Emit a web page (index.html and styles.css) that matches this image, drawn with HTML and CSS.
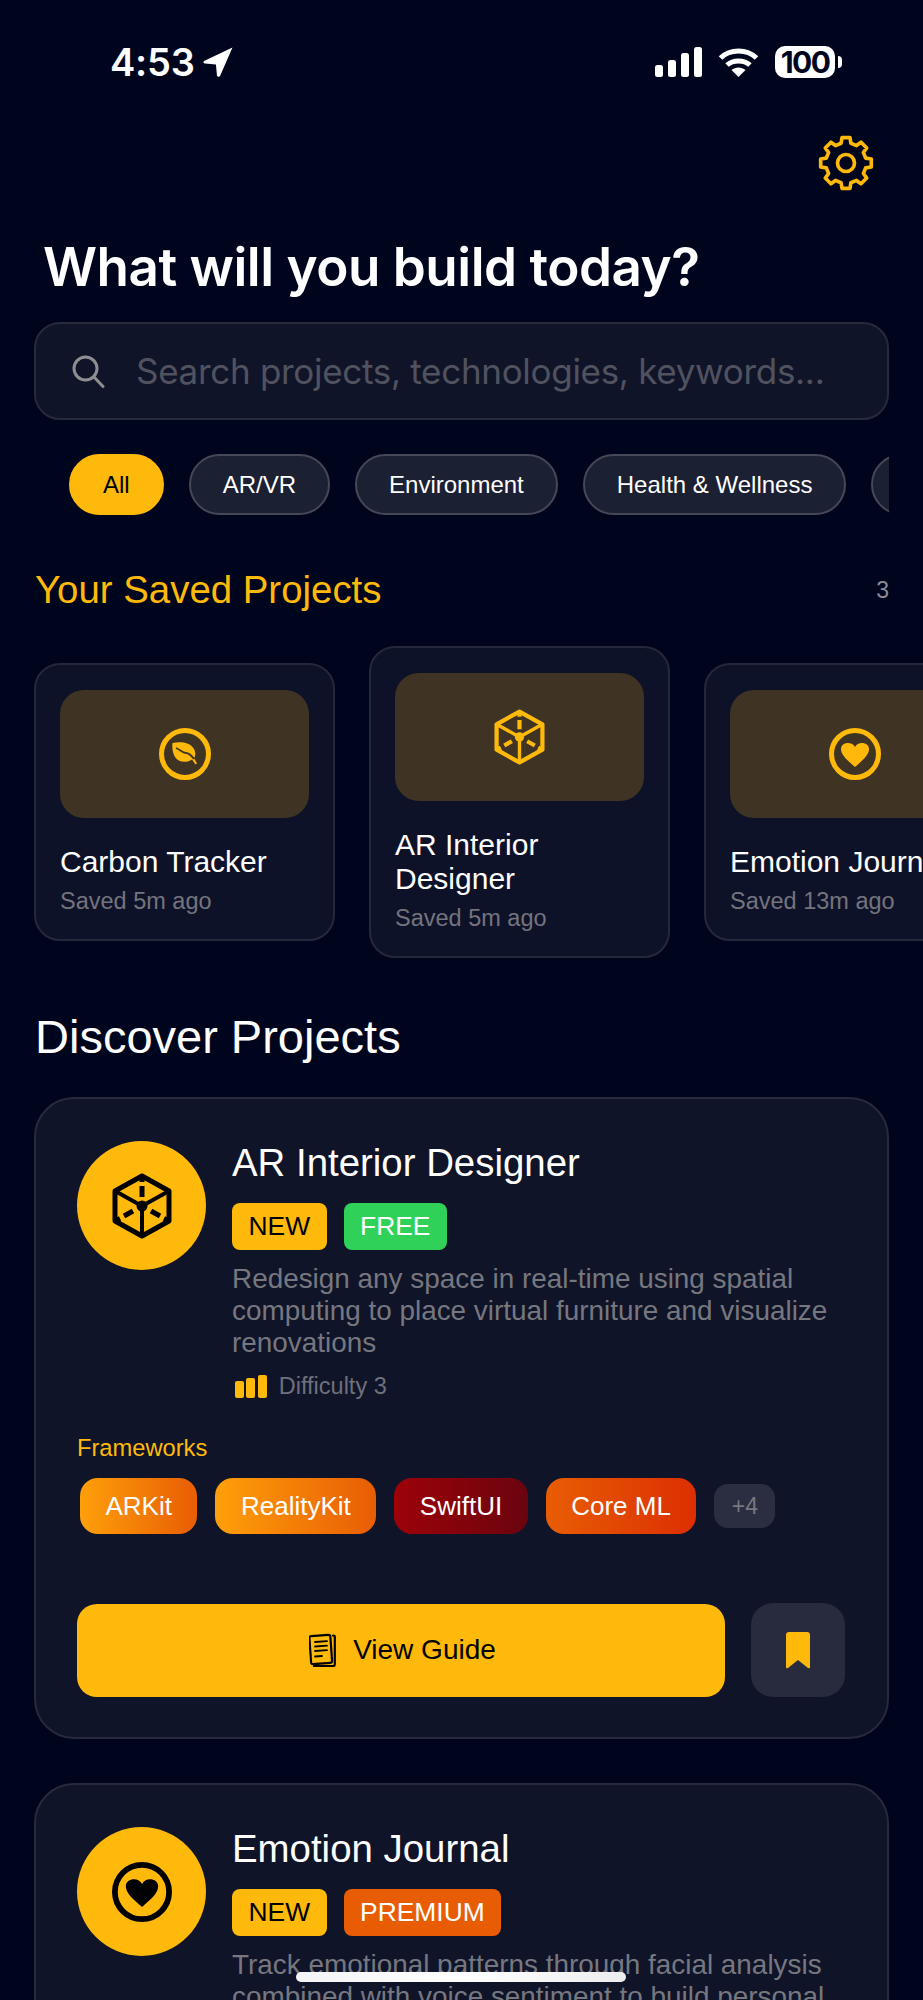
FILE: index.html
```html
<!DOCTYPE html>
<html lang="en">
<head>
<meta charset="utf-8">
<title>What will you build today?</title>
<link rel="stylesheet" href="styles.css">
</head>
<body>
<svg class="defs" width="0" height="0" aria-hidden="true">
  <symbol id="cube" viewBox="0 0 60 66">
    <g fill="none" stroke="currentColor" stroke-width="5" stroke-linejoin="round" stroke-linecap="butt">
      <path d="M30 3 57 18V48L30 63 3 48V18Z"/>
      <path d="M3 18 30 33 57 18M30 33V63" stroke-width="4"/>
      <path d="M30 3V9M30 13V24M21 38 12 43M8 45.5 3 48M39 38 48 43M52 45.5 57 48"/>
    </g>
    <circle cx="30" cy="33" r="5.5" fill="currentColor"/>
  </symbol>
  <symbol id="ring-heart" viewBox="0 0 52 52">
    <circle cx="26" cy="26" r="23.5" fill="none" stroke="currentColor" stroke-width="5"/>
    <path fill="currentColor" d="M26 39C18 32 12 27 12 21 12 17 15.5 15 19 15 22 15 24.8 16.5 26 19 27.2 16.5 30 15 33 15 36.5 15 40 17 40 21 40 27 34 32 26 39Z"/>
  </symbol>
</svg>

<div class="status">
  <div class="status-left">
    <span class="clock">4:53</span>
    <svg class="arrow" viewBox="0 0 29 29"><path fill="#fff" d="M28.5.5 1 13.5C0 14.5.5 16 2 16L12.5 17 13.5 27.5C14 29 16 29 16.5 28Z"/></svg>
  </div>
  <div class="status-right">
    <div class="signal"><i class="s1"></i><i class="s2"></i><i class="s3"></i><i class="s4"></i></div>
    <svg class="wifi" viewBox="0 0 41 30">
      <g fill="none" stroke="#fff" stroke-width="5"><path d="M2.5 11C12 1.5 29 1.5 38.5 11"/><path d="M9 18C15 12.5 26 12.5 32 18"/></g>
      <path fill="#fff" d="M20.5 30 13.5 23C17.5 19.5 23.5 19.5 27.5 23Z"/>
    </svg>
    <div class="battery"><span class="battery-body">100</span><i class="battery-nub"></i></div>
  </div>
</div>

<main class="page">
  <div class="topbar">
    <svg class="gear" viewBox="-30 -30 60 60">
      <g fill="none" stroke="#FFB90A" stroke-width="3.8" stroke-linejoin="round">
        <polygon points="-5.08,-20.38 -4.15,-26.17 4.15,-26.17 5.08,-20.38 10.82,-18 15.57,-21.44 21.44,-15.57 18,-10.82 20.38,-5.08 26.17,-4.15 26.17,4.15 20.38,5.08 18,10.82 21.44,15.57 15.57,21.44 10.82,18 5.08,20.38 4.15,26.17 -4.15,26.17 -5.08,20.38 -10.82,18 -15.57,21.44 -21.44,15.57 -18,10.82 -20.38,5.08 -26.17,4.15 -26.17,-4.15 -20.38,-5.08 -18,-10.82 -21.44,-15.57 -15.57,-21.44 -10.82,-18"/>
        <circle r="8.8"/>
      </g>
    </svg>
  </div>

  <h1 class="headline">What will you build today?</h1>

  <div class="search">
    <svg class="search-icon" viewBox="0 0 33 33"><g fill="none" stroke="#8E8E93" stroke-width="3" stroke-linecap="round"><circle cx="13.5" cy="13.5" r="11.5"/><path d="M22 22 31 31.5"/></g></svg>
    <span class="search-text">Search projects, technologies, keywords...</span>
  </div>

  <div class="chips">
    <span class="chip chip-on">All</span>
    <span class="chip">AR/VR</span>
    <span class="chip">Environment</span>
    <span class="chip">Health &amp; Wellness</span>
    <span class="chip"></span>
  </div>

  <div class="saved-head">
    <h2 class="saved-title">Your Saved Projects</h2>
    <span class="saved-count">3</span>
  </div>

  <div class="saved-row">
    <article class="saved-card">
      <div class="thumb">
        <svg class="thumb-ring" viewBox="0 0 52 52">
          <circle cx="26" cy="26" r="23.5" fill="none" stroke="currentColor" stroke-width="5"/>
          <path fill="currentColor" d="M13.5 15C21 13.5 31 14 35 21 37 25 36.5 28 35 30L38 35.5 36.5 36.5 33 31.5C28 35 20 35 16 29 13.5 25 13 20 13.5 15Z"/>
          <path fill="none" stroke="#3F3423" stroke-width="1.8" d="M17 20C22 22 23 25 27 25 30 25 32 27 35 31"/>
        </svg>
      </div>
      <h3 class="saved-name">Carbon Tracker</h3>
      <p class="saved-when">Saved 5m ago</p>
    </article>
    <article class="saved-card">
      <div class="thumb">
        <svg class="thumb-cube"><use href="#cube"/></svg>
      </div>
      <h3 class="saved-name">AR Interior Designer</h3>
      <p class="saved-when">Saved 5m ago</p>
    </article>
    <article class="saved-card">
      <div class="thumb">
        <svg class="thumb-ring"><use href="#ring-heart"/></svg>
      </div>
      <h3 class="saved-name">Emotion Journal</h3>
      <p class="saved-when">Saved 13m ago</p>
    </article>
  </div>

  <h2 class="discover">Discover Projects</h2>

  <article class="card">
    <div class="card-head">
      <div class="avatar"><svg class="avatar-cube"><use href="#cube"/></svg></div>
      <div class="card-body">
        <h3 class="card-title">AR Interior Designer</h3>
        <div class="badges"><span class="badge badge-new">NEW</span><span class="badge badge-free">FREE</span></div>
        <p class="card-desc">Redesign any space in real-time using spatial computing to place virtual furniture and visualize renovations</p>
        <div class="difficulty">
          <span class="bars"><i class="b1"></i><i class="b2"></i><i class="b3"></i></span>
          <span class="difficulty-text">Difficulty 3</span>
        </div>
      </div>
    </div>
    <div class="fw-label">Frameworks</div>
    <div class="tags">
      <span class="tag tag-orange">ARKit</span>
      <span class="tag tag-orange">RealityKit</span>
      <span class="tag tag-red">SwiftUI</span>
      <span class="tag tag-fire">Core ML</span>
      <span class="tag-more">+4</span>
    </div>
    <div class="actions">
      <button class="guide-btn" type="button">
        <svg class="doc" viewBox="0 0 27 34"><g fill="none" stroke="#000" stroke-width="2.2" stroke-linejoin="round" stroke-linecap="round"><rect x="1.2" y="2.5" width="21" height="28" rx="2" transform="rotate(-4 12 16)"/><path d="M24 2.5 25.8 3V31.5C25.8 32.6 25 33 24 33H5"/><path d="M6 9 18 8.2M6 13.5 18 12.7M6 18 18 17.2M6 23.5 13 23" stroke-width="1.8"/></g></svg>
        <span>View Guide</span>
      </button>
      <button class="save-btn" type="button" aria-label="Bookmark">
        <svg class="bookmark" viewBox="0 0 24 37"><path fill="#FFB90A" d="M3 0H21Q24 0 24 3V35Q24 37 22 36L12 28 2 36Q0 37 0 35V3Q0 0 3 0Z"/></svg>
      </button>
    </div>
  </article>

  <article class="card">
    <div class="card-head">
      <div class="avatar"><svg class="avatar-heart"><use href="#ring-heart"/></svg></div>
      <div class="card-body">
        <h3 class="card-title">Emotion Journal</h3>
        <div class="badges"><span class="badge badge-new">NEW</span><span class="badge badge-premium">PREMIUM</span></div>
        <p class="card-desc">Track emotional patterns through facial analysis combined with voice sentiment to build personal</p>
      </div>
    </div>
  </article>
</main>

<div class="home-indicator"></div>
</body>
</html>
```

FILE: styles.css
```css
* { box-sizing: border-box; }
html, body { margin: 0; padding: 0; }
html { height: 2000px; overflow: hidden; }
body {
  position: relative;
  height: 2000px;
  overflow: hidden;
  background: #00051E;
  color: #fff;
  font-family: "Liberation Sans", Arial, sans-serif;
}
h1, h2, h3, p { margin: 0; font-weight: 400; }
.defs { position: absolute; }

/* status bar */
.status {
  height: 134px;
  padding: 46px 81px 0 110px;
  display: flex;
  justify-content: space-between;
  align-items: flex-start;
}
.status-left { display: flex; align-items: center; gap: 8px; height: 32px; }
.clock { font-family: Inter, sans-serif; font-weight: 600; font-size: 38px; line-height: 32px; letter-spacing: -0.2px; }
.arrow { width: 30px; height: 30px; display: block; }
.status-right { display: flex; align-items: center; gap: 16px; height: 32px; }
.signal { display: flex; align-items: flex-end; gap: 5px; height: 30px; }
.signal i { display: block; width: 8px; border-radius: 2.5px; background: #fff; }
.signal .s1 { height: 12px; }
.signal .s2 { height: 17px; }
.signal .s3 { height: 24px; }
.signal .s4 { height: 30px; }
.wifi { width: 41px; height: 30px; display: block; }
.battery { display: flex; align-items: center; gap: 3px; }
.battery-body {
  width: 60px; height: 32px; border-radius: 10px; background: #fff; color: #00051E;
  font-family: Inter, sans-serif; font-weight: 700; font-size: 30px; line-height: 32px;
  text-align: center; letter-spacing: -1.6px;
}
.battery-nub { display: block; width: 4px; height: 12px; border-radius: 0 4px 4px 0; background: #fff; }

/* page */
.page { padding: 0 34px; }
.topbar { display: flex; justify-content: flex-end; padding-right: 14px; height: 57px; }
.gear { width: 58px; height: 58px; display: block; }
.headline {
  margin: 45px 0 0 9px;
  font-family: Inter, sans-serif; font-weight: 600; font-size: 53px; line-height: 62px; letter-spacing: -0.5px;
}

.search {
  margin-top: 24px; height: 98px; padding: 0 48px 0 36px;
  display: flex; align-items: center; gap: 31px;
  background: #101428; border: 2px solid #262A3B; border-radius: 26px;
}
.search-icon { width: 33px; height: 33px; flex: none; }
.search-text { font-family: Inter, sans-serif; font-size: 35px; color: #50525F; white-space: nowrap; letter-spacing: -0.3px; }

.chips { margin-top: 34px; padding-left: 35px; display: flex; gap: 25px; overflow: hidden; height: 61px; }
.chip {
  flex: none; height: 61px; min-width: 100px; padding: 0 32px; display: flex; align-items: center;
  font-size: 24px; background: #1C2033; border: 2px solid #454857; border-radius: 30.5px;
}
.chip-on { min-width: 0; background: #FFB90A; border-color: #FFB90A; color: #000; }

.saved-head { margin-top: 54px; height: 42px; padding-left: 1px; display: flex; justify-content: space-between; align-items: center; }
.saved-title { color: #FFB90A; font-size: 38.4px; line-height: 42px; }
.saved-count { color: #8A8A95; font-size: 23px; }

.saved-row { margin: 35px -34px 0 0; display: flex; gap: 34px; align-items: center; overflow: hidden; }
.saved-card {
  flex: none; width: 301px; padding: 25px 24px 24px;
  background: #0E1228; border: 2px solid #25283A; border-radius: 26px;
}
.thumb { height: 128px; background: #3F3423; border-radius: 24px; display: flex; align-items: center; justify-content: center; }
.thumb-ring { width: 52px; height: 52px; color: #FFB90A; display: block; }
.thumb-cube { width: 51px; height: 56px; color: #FFB90A; display: block; }
.saved-name { margin-top: 27px; font-size: 30px; line-height: 34px; }
.saved-card:last-child .saved-name { white-space: nowrap; }
.saved-when { margin-top: 8px; font-size: 23.5px; line-height: 28px; color: #74747E; }

.discover { margin-top: 53px; margin-left: 1px; font-size: 47px; line-height: 52px; }

.card {
  margin-top: 44px; padding: 42px 41px 40px;
  background: #0F1429; border: 2px solid #272A3C; border-radius: 40px;
}
.discover + .card { margin-top: 34px; }
.card-head { display: flex; gap: 26px; align-items: flex-start; }
.avatar { flex: none; width: 129px; height: 129px; border-radius: 50%; background: #FFB90A; display: flex; align-items: center; justify-content: center; color: #000; }
.avatar-cube { width: 60px; height: 66px; display: block; }
.avatar-heart { width: 60px; height: 60px; display: block; }
.card-body { flex: 1; min-width: 0; }
.card-title { font-size: 38.4px; line-height: 44px; }
.badges { margin-top: 18px; display: flex; gap: 17px; }
.badge { height: 47px; padding: 0 16.5px; display: flex; align-items: center; border-radius: 8px; font-size: 26.4px; }
.badge-new { background: #FFB90A; color: #000; }
.badge-free { background: #30D158; color: #fff; }
.badge-premium { background: #E85D04; color: #fff; }
.card-desc { margin-top: 13px; font-size: 27.9px; line-height: 32px; color: #77777F; }
.difficulty { margin-top: 13px; height: 28px; padding-left: 3px; display: flex; align-items: center; gap: 12px; }
.bars { display: flex; align-items: flex-end; gap: 2.4px; height: 23px; }
.bars i { display: block; width: 9px; border-radius: 2px; background: #FFB90A; }
.bars .b1 { height: 17px; }
.bars .b2 { height: 20px; }
.bars .b3 { height: 23px; }
.difficulty-text { font-size: 23.5px; color: #6F7079; }

.fw-label { margin-top: 34px; font-size: 23.7px; line-height: 28px; color: #FFB90A; }
.tags { margin: 16px 0 0 3px; display: flex; align-items: center; gap: 18px; }
.tag { height: 56px; padding: 0 25.5px; display: flex; align-items: center; border-radius: 18px; font-size: 26px; color: #fff; }
.tag-orange { background: linear-gradient(90deg, #FF9F0A, #E85D04); }
.tag-red { background: linear-gradient(90deg, #9D0208, #6A040F); }
.tag-fire { background: linear-gradient(90deg, #E85D04, #DC2F02); }
.tag-more { height: 44px; width: 61px; display: flex; align-items: center; justify-content: center; border-radius: 14px; background: #2A2E40; font-size: 23px; color: #77787F; }

.actions { margin-top: 69px; display: flex; gap: 26px; align-items: center; }
.guide-btn {
  flex: none; width: 648px; height: 93px; border: 0; border-radius: 20px; background: #FFB90A; color: #000;
  display: flex; align-items: center; justify-content: center; gap: 17px; padding: 0 0 0 3px;
  font-family: inherit; font-size: 28px;
}
.doc { width: 27px; height: 34px; display: block; }
.save-btn { flex: none; width: 94px; height: 94px; border: 0; border-radius: 22px; background: #272B3D; display: flex; align-items: center; justify-content: center; padding: 0; }
.bookmark { width: 24px; height: 37px; display: block; }

.home-indicator {
  position: absolute; left: 296px; top: 1972px; width: 330px; height: 10px; border-radius: 5px;
  background: linear-gradient(90deg, #F4F4F6, #fff 50%, #EDEDEF);
}
```
